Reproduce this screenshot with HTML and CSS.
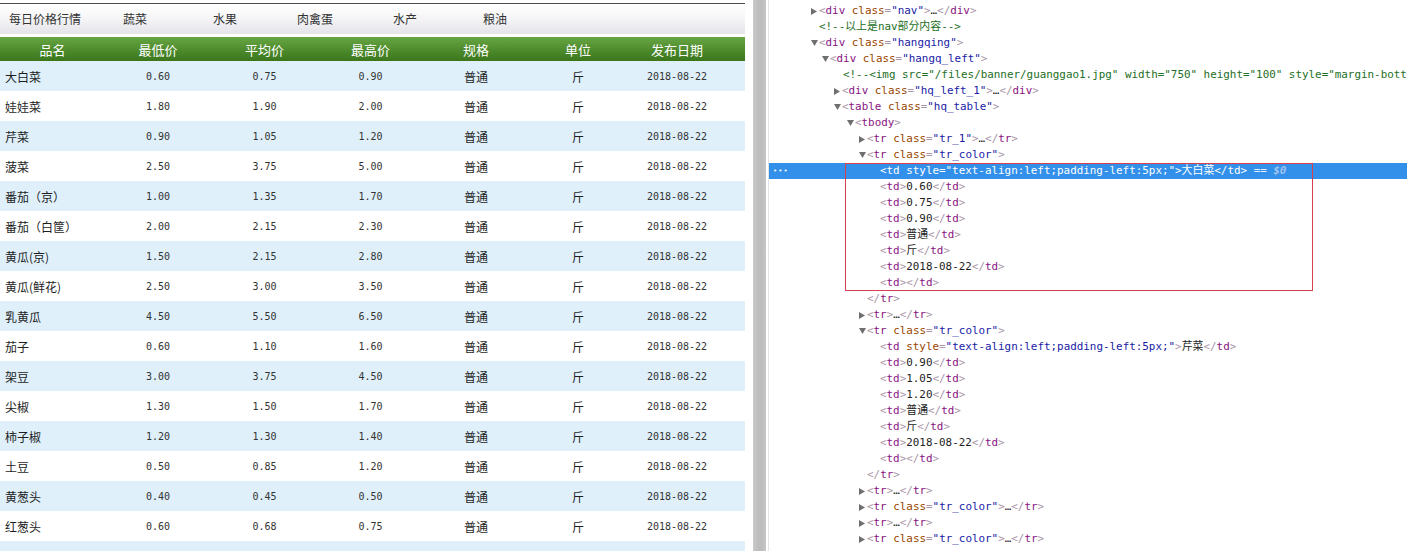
FILE: index.html
```html
<!DOCTYPE html>
<html lang="zh-CN">
<head>
<meta charset="utf-8">
<title>每日价格行情</title>
<link rel="stylesheet" href="styles.css">
</head>
<body>
<div class="screen">
  <div class="left-pane">
    <div class="page">
      <div class="nav">
        <span class="nav-item">每日价格行情</span>
        <span class="nav-item">蔬菜</span>
        <span class="nav-item">水果</span>
        <span class="nav-item">肉禽蛋</span>
        <span class="nav-item">水产</span>
        <span class="nav-item">粮油</span>
      </div>
      <table class="hq-table">
        <colgroup>
          <col class="c1"><col class="c2"><col class="c3"><col class="c4"><col class="c5"><col class="c6"><col class="c7"><col class="c8">
        </colgroup>
        <thead>
          <tr class="tr-head"><th>品名</th><th>最低价</th><th>平均价</th><th>最高价</th><th>规格</th><th>单位</th><th>发布日期</th><th></th></tr>
        </thead>
        <tbody>
          <tr class="tr-color"><td class="name">大白菜</td><td class="num">0.60</td><td class="num">0.75</td><td class="num">0.90</td><td>普通</td><td>斤</td><td class="num">2018-08-22</td><td></td></tr>
          <tr><td class="name">娃娃菜</td><td class="num">1.80</td><td class="num">1.90</td><td class="num">2.00</td><td>普通</td><td>斤</td><td class="num">2018-08-22</td><td></td></tr>
          <tr class="tr-color"><td class="name">芹菜</td><td class="num">0.90</td><td class="num">1.05</td><td class="num">1.20</td><td>普通</td><td>斤</td><td class="num">2018-08-22</td><td></td></tr>
          <tr><td class="name">菠菜</td><td class="num">2.50</td><td class="num">3.75</td><td class="num">5.00</td><td>普通</td><td>斤</td><td class="num">2018-08-22</td><td></td></tr>
          <tr class="tr-color"><td class="name">番茄（京）</td><td class="num">1.00</td><td class="num">1.35</td><td class="num">1.70</td><td>普通</td><td>斤</td><td class="num">2018-08-22</td><td></td></tr>
          <tr><td class="name">番茄（白筐）</td><td class="num">2.00</td><td class="num">2.15</td><td class="num">2.30</td><td>普通</td><td>斤</td><td class="num">2018-08-22</td><td></td></tr>
          <tr class="tr-color"><td class="name">黄瓜(京)</td><td class="num">1.50</td><td class="num">2.15</td><td class="num">2.80</td><td>普通</td><td>斤</td><td class="num">2018-08-22</td><td></td></tr>
          <tr><td class="name">黄瓜(鲜花)</td><td class="num">2.50</td><td class="num">3.00</td><td class="num">3.50</td><td>普通</td><td>斤</td><td class="num">2018-08-22</td><td></td></tr>
          <tr class="tr-color"><td class="name">乳黄瓜</td><td class="num">4.50</td><td class="num">5.50</td><td class="num">6.50</td><td>普通</td><td>斤</td><td class="num">2018-08-22</td><td></td></tr>
          <tr><td class="name">茄子</td><td class="num">0.60</td><td class="num">1.10</td><td class="num">1.60</td><td>普通</td><td>斤</td><td class="num">2018-08-22</td><td></td></tr>
          <tr class="tr-color"><td class="name">架豆</td><td class="num">3.00</td><td class="num">3.75</td><td class="num">4.50</td><td>普通</td><td>斤</td><td class="num">2018-08-22</td><td></td></tr>
          <tr><td class="name">尖椒</td><td class="num">1.30</td><td class="num">1.50</td><td class="num">1.70</td><td>普通</td><td>斤</td><td class="num">2018-08-22</td><td></td></tr>
          <tr class="tr-color"><td class="name">柿子椒</td><td class="num">1.20</td><td class="num">1.30</td><td class="num">1.40</td><td>普通</td><td>斤</td><td class="num">2018-08-22</td><td></td></tr>
          <tr><td class="name">土豆</td><td class="num">0.50</td><td class="num">0.85</td><td class="num">1.20</td><td>普通</td><td>斤</td><td class="num">2018-08-22</td><td></td></tr>
          <tr class="tr-color"><td class="name">黄葱头</td><td class="num">0.40</td><td class="num">0.45</td><td class="num">0.50</td><td>普通</td><td>斤</td><td class="num">2018-08-22</td><td></td></tr>
          <tr><td class="name">红葱头</td><td class="num">0.60</td><td class="num">0.68</td><td class="num">0.75</td><td>普通</td><td>斤</td><td class="num">2018-08-22</td><td></td></tr>
          <tr class="tr-color"><td></td><td></td><td></td><td></td><td></td><td></td><td></td><td></td></tr>
        </tbody>
      </table>
    </div>
  </div>
  <div class="splitter"></div>
  <div class="devtools">
    <div class="line l0"><span class="arr"><svg width="6" height="7" viewBox="0 0 6 7"><polygon points="0,0 6,3.5 0,7"/></svg></span><span class="tg">&lt;</span><span class="tn">div</span> <span class="an">class</span><span class="tg">=</span><span class="av">"nav"</span><span class="tg">&gt;</span>…<span class="tg">&lt;/</span><span class="tn">div</span><span class="tg">&gt;</span></div>
    <div class="line l0"><span class="cm">&lt;!--以上是nav部分内容--&gt;</span></div>
    <div class="line l0"><span class="arr"><svg width="7" height="6" viewBox="0 0 7 6"><polygon points="0,0 7,0 3.5,6"/></svg></span><span class="tg">&lt;</span><span class="tn">div</span> <span class="an">class</span><span class="tg">=</span><span class="av">"hangqing"</span><span class="tg">&gt;</span></div>
    <div class="line l1"><span class="arr"><svg width="7" height="6" viewBox="0 0 7 6"><polygon points="0,0 7,0 3.5,6"/></svg></span><span class="tg">&lt;</span><span class="tn">div</span> <span class="an">class</span><span class="tg">=</span><span class="av">"hangq_left"</span><span class="tg">&gt;</span></div>
    <div class="line l2c"><span class="cm">&lt;!--&lt;img src="/files/banner/guanggao1.jpg" width="750" height="100" style="margin-bottom:10px;" /&gt;--&gt;</span></div>
    <div class="line l2"><span class="arr"><svg width="6" height="7" viewBox="0 0 6 7"><polygon points="0,0 6,3.5 0,7"/></svg></span><span class="tg">&lt;</span><span class="tn">div</span> <span class="an">class</span><span class="tg">=</span><span class="av">"hq_left_1"</span><span class="tg">&gt;</span>…<span class="tg">&lt;/</span><span class="tn">div</span><span class="tg">&gt;</span></div>
    <div class="line l2"><span class="arr"><svg width="7" height="6" viewBox="0 0 7 6"><polygon points="0,0 7,0 3.5,6"/></svg></span><span class="tg">&lt;</span><span class="tn">table</span> <span class="an">class</span><span class="tg">=</span><span class="av">"hq_table"</span><span class="tg">&gt;</span></div>
    <div class="line l3"><span class="arr"><svg width="7" height="6" viewBox="0 0 7 6"><polygon points="0,0 7,0 3.5,6"/></svg></span><span class="tg">&lt;</span><span class="tn">tbody</span><span class="tg">&gt;</span></div>
    <div class="line l4"><span class="arr"><svg width="6" height="7" viewBox="0 0 6 7"><polygon points="0,0 6,3.5 0,7"/></svg></span><span class="tg">&lt;</span><span class="tn">tr</span> <span class="an">class</span><span class="tg">=</span><span class="av">"tr_1"</span><span class="tg">&gt;</span>…<span class="tg">&lt;/</span><span class="tn">tr</span><span class="tg">&gt;</span></div>
    <div class="line l4"><span class="arr"><svg width="7" height="6" viewBox="0 0 7 6"><polygon points="0,0 7,0 3.5,6"/></svg></span><span class="tg">&lt;</span><span class="tn">tr</span> <span class="an">class</span><span class="tg">=</span><span class="av">"tr_color"</span><span class="tg">&gt;</span></div>
    <div class="selbox">
      <div class="line l5 selected"><span class="dots">•••</span>&lt;td style="text-align:left;padding-left:5px;"&gt;大白菜&lt;/td&gt; <span class="eq">==</span> <span class="dollar">$0</span></div>
      <div class="line l5"><span class="tg">&lt;</span><span class="tn">td</span><span class="tg">&gt;</span>0.60<span class="tg">&lt;/</span><span class="tn">td</span><span class="tg">&gt;</span></div>
      <div class="line l5"><span class="tg">&lt;</span><span class="tn">td</span><span class="tg">&gt;</span>0.75<span class="tg">&lt;/</span><span class="tn">td</span><span class="tg">&gt;</span></div>
      <div class="line l5"><span class="tg">&lt;</span><span class="tn">td</span><span class="tg">&gt;</span>0.90<span class="tg">&lt;/</span><span class="tn">td</span><span class="tg">&gt;</span></div>
      <div class="line l5"><span class="tg">&lt;</span><span class="tn">td</span><span class="tg">&gt;</span>普通<span class="tg">&lt;/</span><span class="tn">td</span><span class="tg">&gt;</span></div>
      <div class="line l5"><span class="tg">&lt;</span><span class="tn">td</span><span class="tg">&gt;</span>斤<span class="tg">&lt;/</span><span class="tn">td</span><span class="tg">&gt;</span></div>
      <div class="line l5"><span class="tg">&lt;</span><span class="tn">td</span><span class="tg">&gt;</span>2018-08-22<span class="tg">&lt;/</span><span class="tn">td</span><span class="tg">&gt;</span></div>
      <div class="line l5"><span class="tg">&lt;</span><span class="tn">td</span><span class="tg">&gt;&lt;/</span><span class="tn">td</span><span class="tg">&gt;</span></div>
    </div>
    <div class="line l4"><span class="tg">&lt;/</span><span class="tn">tr</span><span class="tg">&gt;</span></div>
    <div class="line l4"><span class="arr"><svg width="6" height="7" viewBox="0 0 6 7"><polygon points="0,0 6,3.5 0,7"/></svg></span><span class="tg">&lt;</span><span class="tn">tr</span><span class="tg">&gt;</span>…<span class="tg">&lt;/</span><span class="tn">tr</span><span class="tg">&gt;</span></div>
    <div class="line l4"><span class="arr"><svg width="7" height="6" viewBox="0 0 7 6"><polygon points="0,0 7,0 3.5,6"/></svg></span><span class="tg">&lt;</span><span class="tn">tr</span> <span class="an">class</span><span class="tg">=</span><span class="av">"tr_color"</span><span class="tg">&gt;</span></div>
    <div class="line l5"><span class="tg">&lt;</span><span class="tn">td</span> <span class="an">style</span><span class="tg">=</span><span class="av">"text-align:left;padding-left:5px;"</span><span class="tg">&gt;</span>芹菜<span class="tg">&lt;/</span><span class="tn">td</span><span class="tg">&gt;</span></div>
    <div class="line l5"><span class="tg">&lt;</span><span class="tn">td</span><span class="tg">&gt;</span>0.90<span class="tg">&lt;/</span><span class="tn">td</span><span class="tg">&gt;</span></div>
    <div class="line l5"><span class="tg">&lt;</span><span class="tn">td</span><span class="tg">&gt;</span>1.05<span class="tg">&lt;/</span><span class="tn">td</span><span class="tg">&gt;</span></div>
    <div class="line l5"><span class="tg">&lt;</span><span class="tn">td</span><span class="tg">&gt;</span>1.20<span class="tg">&lt;/</span><span class="tn">td</span><span class="tg">&gt;</span></div>
    <div class="line l5"><span class="tg">&lt;</span><span class="tn">td</span><span class="tg">&gt;</span>普通<span class="tg">&lt;/</span><span class="tn">td</span><span class="tg">&gt;</span></div>
    <div class="line l5"><span class="tg">&lt;</span><span class="tn">td</span><span class="tg">&gt;</span>斤<span class="tg">&lt;/</span><span class="tn">td</span><span class="tg">&gt;</span></div>
    <div class="line l5"><span class="tg">&lt;</span><span class="tn">td</span><span class="tg">&gt;</span>2018-08-22<span class="tg">&lt;/</span><span class="tn">td</span><span class="tg">&gt;</span></div>
    <div class="line l5"><span class="tg">&lt;</span><span class="tn">td</span><span class="tg">&gt;&lt;/</span><span class="tn">td</span><span class="tg">&gt;</span></div>
    <div class="line l4"><span class="tg">&lt;/</span><span class="tn">tr</span><span class="tg">&gt;</span></div>
    <div class="line l4"><span class="arr"><svg width="6" height="7" viewBox="0 0 6 7"><polygon points="0,0 6,3.5 0,7"/></svg></span><span class="tg">&lt;</span><span class="tn">tr</span><span class="tg">&gt;</span>…<span class="tg">&lt;/</span><span class="tn">tr</span><span class="tg">&gt;</span></div>
    <div class="line l4"><span class="arr"><svg width="6" height="7" viewBox="0 0 6 7"><polygon points="0,0 6,3.5 0,7"/></svg></span><span class="tg">&lt;</span><span class="tn">tr</span> <span class="an">class</span><span class="tg">=</span><span class="av">"tr_color"</span><span class="tg">&gt;</span>…<span class="tg">&lt;/</span><span class="tn">tr</span><span class="tg">&gt;</span></div>
    <div class="line l4"><span class="arr"><svg width="6" height="7" viewBox="0 0 6 7"><polygon points="0,0 6,3.5 0,7"/></svg></span><span class="tg">&lt;</span><span class="tn">tr</span><span class="tg">&gt;</span>…<span class="tg">&lt;/</span><span class="tn">tr</span><span class="tg">&gt;</span></div>
    <div class="line l4"><span class="arr"><svg width="6" height="7" viewBox="0 0 6 7"><polygon points="0,0 6,3.5 0,7"/></svg></span><span class="tg">&lt;</span><span class="tn">tr</span> <span class="an">class</span><span class="tg">=</span><span class="av">"tr_color"</span><span class="tg">&gt;</span>…<span class="tg">&lt;/</span><span class="tn">tr</span><span class="tg">&gt;</span></div>
  </div>
</div>
</body>
</html>
```
FILE: styles.css
```css
html, body {
  margin: 0;
  padding: 0;
  background: #fff;
}
body {
  width: 1407px;
  height: 551px;
  overflow: hidden;
}
.screen {
  display: flex;
  height: 551px;
  overflow: hidden;
}

/* ---------- left page ---------- */
.left-pane {
  flex: none;
  width: 753px;
  background: #fff;
  overflow: hidden;
}
.page {
  width: 745px;
  padding-top: 3px;
  font-family: "Noto Sans CJK SC", "Noto Sans", sans-serif;
  font-size: 12px;
  color: #222;
}
.nav {
  display: flex;
  height: 30px;
  border-top: 1px solid #4a4a4a;
  background: linear-gradient(to bottom, #ffffff 0%, #f6f6f8 45%, #e4e4e9 100%);
  margin-bottom: 3px;
}
.nav-item {
  width: 90px;
  text-align: center;
  line-height: 30px;
  font-size: 12px;
  color: #333;
}
.hq-table {
  width: 745px;
  table-layout: fixed;
  border-collapse: collapse;
  border-spacing: 0;
}
.c1 { width: 105px; }
.c2 { width: 106px; }
.c3 { width: 107px; }
.c4 { width: 105px; }
.c5 { width: 106px; }
.c6 { width: 98px; }
.c7 { width: 100px; }
.c8 { width: 18px; }
.tr-head th {
  height: 24px;
  padding: 0;
  font-weight: normal;
  font-size: 13px;
  color: #fff;
  text-align: center;
  background: linear-gradient(to bottom, #68a544 0%, #4f8d2e 50%, #3b761c 100%);
}
.hq-table td {
  height: 30px;
  padding: 0;
  text-align: center;
  font-size: 12px;
  color: #1e1e1e;
  white-space: nowrap;
}
.hq-table td.name {
  text-align: left;
  padding-left: 5px;
}
.hq-table td.num {
  font-family: "DejaVu Sans Mono", "Liberation Mono", monospace;
  font-size: 10px;
  color: #333;
}
.tr-color td {
  background: #dff0fb;
}

/* ---------- splitter ---------- */
.splitter {
  flex: none;
  width: 13px;
  margin-right: 2px;
  background: linear-gradient(to right, #cacaca 0%, #bdbdbd 40%, #bdbdbd 70%, #c8c8c8 100%);
}

/* ---------- devtools ---------- */
.devtools {
  flex: 1;
  min-width: 0;
  border-left: 1px solid #e4e4e4;
  padding-top: 3px;
  overflow: hidden;
  font-family: "DejaVu Sans Mono", "Liberation Mono", "Noto Sans CJK SC", monospace;
  font-size: 10.9px;
  color: #222;
}
.line {
  position: relative;
  height: 16px;
  line-height: 16px;
  white-space: pre;
  overflow: visible;
}
.l0 { padding-left: 50px; }
.l1 { padding-left: 61px; }
.l2 { padding-left: 73px; }
.l2c { padding-left: 74px; }
.l3 { padding-left: 86px; }
.l4 { padding-left: 98px; }
.l5 { padding-left: 111px; }

.arr {
  display: inline-block;
  width: 8px;
  margin-left: -8px;
  vertical-align: top;
  height: 16px;
}
.arr svg {
  display: block;
  margin-top: 5px;
  fill: #6f6f6f;
}
.tg { color: #a894a6; }
.tn { color: #881280; }
.an { color: #994500; }
.av { color: #1a1aa6; }
.cm { color: #236e25; }

.selected {
  background: #3390ea;
  color: #fff;
}
.dots {
  position: absolute;
  left: 4px;
  top: 0;
  font-size: 7px;
  letter-spacing: 1px;
  color: #fff;
}
.eq { color: #e8f1fc; }
.dollar {
  color: #9fc3ee;
  font-style: italic;
  font-weight: bold;
}
.selbox {
  position: relative;
}
.selbox::after {
  content: "";
  position: absolute;
  left: 76px;
  top: 0;
  width: 466px;
  height: 126px;
  border: 1px solid #d6404f;
  pointer-events: none;
}
```
